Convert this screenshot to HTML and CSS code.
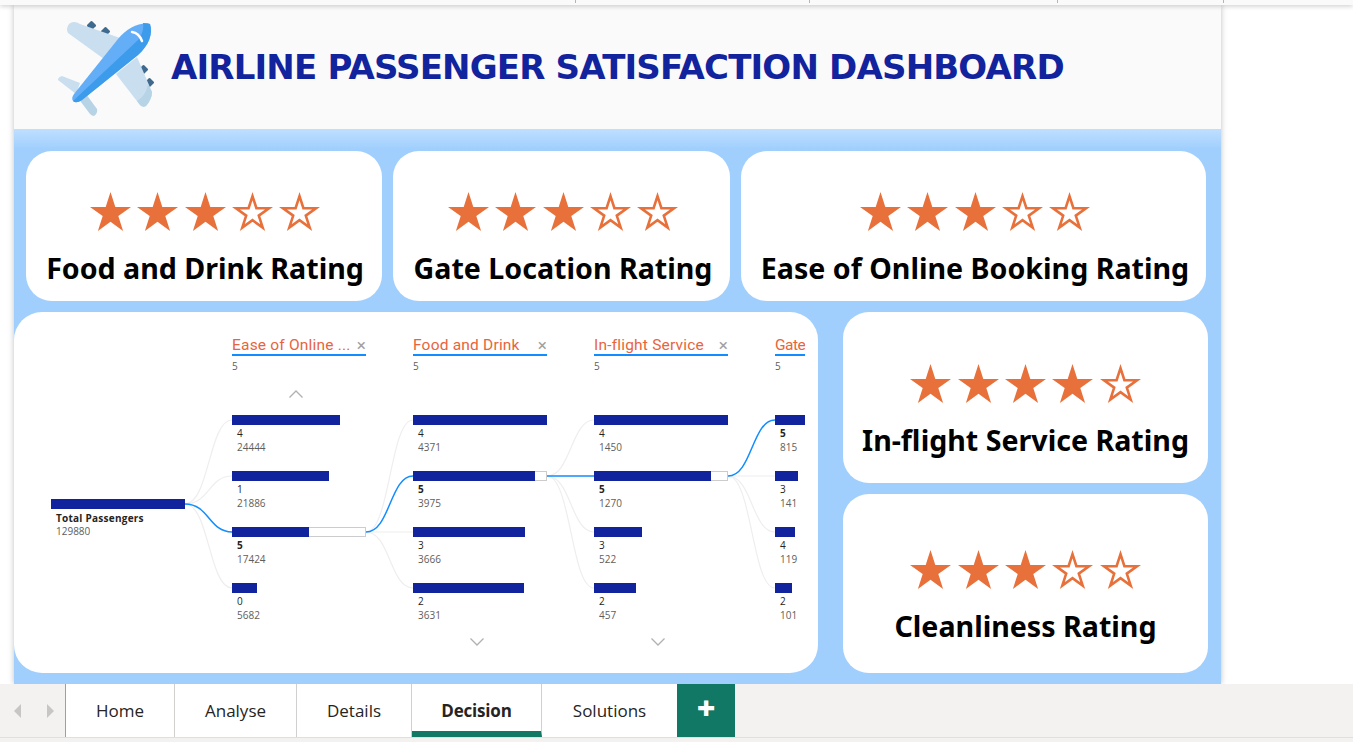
FILE: index.html
```html
<!DOCTYPE html>
<html lang="en">
<head>
  <meta charset="UTF-8">
  <title>Airline Passenger Satisfaction Dashboard</title>
  <link rel="stylesheet" href="styles.css">
</head>
<body>

  <svg class="defs" width="0" height="0">
    <defs>
      <polygon id="star-full" points="20.5,0 25.3,14.9 41,14.9 28.3,24.1 33.1,39 20.5,29.8 7.9,39 12.7,24.1 0,14.9 15.7,14.9"/>
      <polygon id="star-empty" points="20.5,4.2 24.4,16.2 37,16.2 26.8,23.6 30.7,35.6 20.5,28.2 10.3,35.6 14.2,23.6 4,16.2 16.6,16.2"/>
    </defs>
  </svg>

  <div class="topbar">
    <span class="tick t1"></span>
    <span class="tick t2"></span>
    <span class="tick t3"></span>
    <span class="tick t4"></span>
  </div>

  <div class="main">
    <div class="report">
      <div class="header">
        <svg class="plane" width="100" height="100" viewBox="55 15 100 100">
          <rect x="88" y="20" width="7" height="7" rx="1" transform="rotate(45 91.5 23.5)" fill="#3f6a8e"/>
          <rect x="102" y="26" width="7" height="7" rx="1" transform="rotate(45 105.5 29.5)" fill="#3f6a8e"/>
          <rect x="140" y="64" width="7" height="7" rx="1" transform="rotate(45 143.5 67.5)" fill="#3f6a8e"/>
          <rect x="146" y="77" width="7" height="7" rx="1" transform="rotate(45 149.5 80.5)" fill="#3f6a8e"/>
          <path d="M67 27 Q68 20 74 20 Q77 20 80 22 L120 36 L104 57 L68 31 Q67 29 67 27Z" fill="#c9deee"/>
          <path d="M137 55 L152 90 Q152 97 146 104 Q143 106 140 103 L116 72Z" fill="#c9deee"/>
          <path d="M148 82 L152 90 Q152 97 146 104 Q143 106 140 103 L137 99 Q146 94 148 82Z" fill="#b7d3e6"/>
          <path d="M58 78 Q58 75 62 74 L80 81 L76 92Z" fill="#c9deee"/>
          <path d="M78 96 L86 92 L97 107 Q98 111 94 114 Q92 114 90 112Z" fill="#b7d3e6"/>
          <path d="M150 22 C153 32 149 43 138 53 L82 98 Q76 102 73 99 Q71 96 74 92 L118 37 C127 26 140 20 150 22Z" fill="#64aef8"/>
          <path d="M150 22 C153 32 149 43 138 53 L82 98 Q76 102 73 99 L138 38 C142 33 144 27 143 21 Q147 21 150 22Z" fill="#3d9beb"/>
          <path d="M132 30 Q139 31 142 39" fill="none" stroke="#fff" stroke-width="2.5" stroke-linecap="round"/>
        </svg>
        <h1 class="title">AIRLINE PASSENGER SATISFACTION DASHBOARD</h1>
      </div>

      <div class="canvas">
        <div class="row-top">
          <div class="card card-food">
            <div class="stars">
              <svg class="star" viewBox="0 0 41 39"><use href="#star-full"/></svg>
              <svg class="star" viewBox="0 0 41 39"><use href="#star-full"/></svg>
              <svg class="star" viewBox="0 0 41 39"><use href="#star-full"/></svg>
              <svg class="star" viewBox="0 0 41 39"><use href="#star-empty" class="hollow"/></svg>
              <svg class="star" viewBox="0 0 41 39"><use href="#star-empty" class="hollow"/></svg>
            </div>
            <div class="card-label">Food and Drink Rating</div>
          </div>
          <div class="card card-gate">
            <div class="stars">
              <svg class="star" viewBox="0 0 41 39"><use href="#star-full"/></svg>
              <svg class="star" viewBox="0 0 41 39"><use href="#star-full"/></svg>
              <svg class="star" viewBox="0 0 41 39"><use href="#star-full"/></svg>
              <svg class="star" viewBox="0 0 41 39"><use href="#star-empty" class="hollow"/></svg>
              <svg class="star" viewBox="0 0 41 39"><use href="#star-empty" class="hollow"/></svg>
            </div>
            <div class="card-label">Gate Location Rating</div>
          </div>
          <div class="card card-booking">
            <div class="stars">
              <svg class="star" viewBox="0 0 41 39"><use href="#star-full"/></svg>
              <svg class="star" viewBox="0 0 41 39"><use href="#star-full"/></svg>
              <svg class="star" viewBox="0 0 41 39"><use href="#star-full"/></svg>
              <svg class="star" viewBox="0 0 41 39"><use href="#star-empty" class="hollow"/></svg>
              <svg class="star" viewBox="0 0 41 39"><use href="#star-empty" class="hollow"/></svg>
            </div>
            <div class="card-label">Ease of Online Booking Rating</div>
          </div>
        </div>

        <div class="row-bottom">
          <div class="tree-card">
            <svg class="links" width="804" height="361" viewBox="0 0 804 361">
              <g class="link">
                <path d="M171 192 C195 192 195 108 218 108"/>
                <path d="M171 192 C195 192 195 164 218 164"/>
                <path d="M171 192 C195 192 195 276 218 276"/>
                <path d="M352 220 C376 220 376 108 399 108"/>
                <path d="M352 220 L399 220"/>
                <path d="M352 220 C376 220 376 276 399 276"/>
                <path d="M533 164 C557 164 557 108 580 108"/>
                <path d="M533 164 C557 164 557 220 580 220"/>
                <path d="M533 164 C557 164 557 276 580 276"/>
                <path d="M714 164 L761 164"/>
                <path d="M714 164 C738 164 738 220 761 220"/>
                <path d="M714 164 C738 164 738 276 761 276"/>
              </g>
              <g class="link-on">
                <path d="M171 192 C195 192 195 220 218 220"/>
                <path d="M352 220 C376 220 376 164 399 164"/>
                <path d="M533 164 L580 164"/>
                <path d="M714 164 C738 164 738 108 761 108"/>
              </g>
            </svg>

            <div class="tree">
              <div class="col col-root">
                <div class="bar" style="width:134px"></div>
                <div class="node-text">
                  <div class="lbl strong total">Total Passengers</div>
                  <div class="num">129880</div>
                </div>
              </div>

              <div class="col">
                <div class="col-head"><span class="col-name">Ease of Online ...</span><span class="col-x">×</span></div>
                <div class="col-val">5</div>
                <div class="chev-slot"><svg class="chev" width="14" height="8" viewBox="0 0 14 8"><path d="M0.5 7.5 L7 1 L13.5 7.5"/></svg></div>
                <div class="node"><div class="bar" style="width:108px"></div><div class="node-text"><div class="lbl">4</div><div class="num">24444</div></div></div>
                <div class="node"><div class="bar" style="width:97px"></div><div class="node-text"><div class="lbl">1</div><div class="num">21886</div></div></div>
                <div class="node"><div class="track"><div class="bar" style="width:77px"></div></div><div class="node-text"><div class="lbl strong">5</div><div class="num">17424</div></div></div>
                <div class="node"><div class="bar" style="width:25px"></div><div class="node-text"><div class="lbl">0</div><div class="num">5682</div></div></div>
              </div>

              <div class="col">
                <div class="col-head"><span class="col-name">Food and Drink</span><span class="col-x">×</span></div>
                <div class="col-val">5</div>
                <div class="chev-slot"></div>
                <div class="node"><div class="bar" style="width:134px"></div><div class="node-text"><div class="lbl">4</div><div class="num">4371</div></div></div>
                <div class="node"><div class="track"><div class="bar" style="width:122px"></div></div><div class="node-text"><div class="lbl strong">5</div><div class="num">3975</div></div></div>
                <div class="node"><div class="bar" style="width:112px"></div><div class="node-text"><div class="lbl">3</div><div class="num">3666</div></div></div>
                <div class="node"><div class="bar" style="width:111px"></div><div class="node-text"><div class="lbl">2</div><div class="num">3631</div></div></div>
                <svg class="chev chev-down" width="14" height="8" viewBox="0 0 14 8"><path d="M0.5 0.5 L7 7 L13.5 0.5"/></svg>
              </div>

              <div class="col">
                <div class="col-head"><span class="col-name">In-flight Service</span><span class="col-x">×</span></div>
                <div class="col-val">5</div>
                <div class="chev-slot"></div>
                <div class="node"><div class="bar" style="width:134px"></div><div class="node-text"><div class="lbl">4</div><div class="num">1450</div></div></div>
                <div class="node"><div class="track"><div class="bar" style="width:117px"></div></div><div class="node-text"><div class="lbl strong">5</div><div class="num">1270</div></div></div>
                <div class="node"><div class="bar" style="width:48px"></div><div class="node-text"><div class="lbl">3</div><div class="num">522</div></div></div>
                <div class="node"><div class="bar" style="width:42px"></div><div class="node-text"><div class="lbl">2</div><div class="num">457</div></div></div>
                <svg class="chev chev-down" width="14" height="8" viewBox="0 0 14 8"><path d="M0.5 0.5 L7 7 L13.5 0.5"/></svg>
              </div>

              <div class="col">
                <div class="col-head"><span class="col-name col-name-tight">Gate</span></div>
                <div class="col-val">5</div>
                <div class="chev-slot"></div>
                <div class="node"><div class="bar" style="width:134px"></div><div class="node-text"><div class="lbl strong">5</div><div class="num">815</div></div></div>
                <div class="node"><div class="bar" style="width:23px"></div><div class="node-text"><div class="lbl">3</div><div class="num">141</div></div></div>
                <div class="node"><div class="bar" style="width:20px"></div><div class="node-text"><div class="lbl">4</div><div class="num">119</div></div></div>
                <div class="node"><div class="bar" style="width:17px"></div><div class="node-text"><div class="lbl">2</div><div class="num">101</div></div></div>
              </div>
            </div>
          </div>

          <div class="side">
            <div class="card card-flight">
              <div class="stars">
                <svg class="star" viewBox="0 0 41 39"><use href="#star-full"/></svg>
                <svg class="star" viewBox="0 0 41 39"><use href="#star-full"/></svg>
                <svg class="star" viewBox="0 0 41 39"><use href="#star-full"/></svg>
                <svg class="star" viewBox="0 0 41 39"><use href="#star-full"/></svg>
                <svg class="star" viewBox="0 0 41 39"><use href="#star-empty" class="hollow"/></svg>
              </div>
              <div class="card-label">In-flight Service Rating</div>
            </div>
            <div class="card card-clean">
              <div class="stars">
                <svg class="star" viewBox="0 0 41 39"><use href="#star-full"/></svg>
                <svg class="star" viewBox="0 0 41 39"><use href="#star-full"/></svg>
                <svg class="star" viewBox="0 0 41 39"><use href="#star-full"/></svg>
                <svg class="star" viewBox="0 0 41 39"><use href="#star-empty" class="hollow"/></svg>
                <svg class="star" viewBox="0 0 41 39"><use href="#star-empty" class="hollow"/></svg>
              </div>
              <div class="card-label">Cleanliness Rating</div>
            </div>
          </div>
        </div>
      </div>
    </div>
  </div>

  <div class="tabs">
    <div class="tab-arrows">
      <span class="arrow arrow-left"></span>
      <span class="arrow arrow-right"></span>
    </div>
    <div class="tab tab-home">Home</div>
    <div class="tab tab-analyse">Analyse</div>
    <div class="tab tab-details">Details</div>
    <div class="tab tab-decision active">Decision</div>
    <div class="tab tab-solutions">Solutions</div>
    <div class="tab-add">+</div>
  </div>
  <div class="statusbar"></div>

</body>
</html>
```

FILE: styles.css
```css
html, body {
  margin: 0;
  height: 742px;
  overflow: hidden;
  background: #fff;
}

body {
  display: flex;
  flex-direction: column;
  font-family: "Open Sans", "Noto Sans", sans-serif;
}

.defs {
  position: absolute;
}

/* top strip */
.topbar {
  flex: 0 0 5px;
  display: flex;
  background: #fafafa;
  box-shadow: 0 1px 5px rgba(0, 0, 0, 0.22);
  position: relative;
  z-index: 2;
}

.tick {
  height: 3px;
  border-right: 1px solid #b5b5b5;
}
.t1 { width: 575px; }
.t2 { width: 233px; }
.t3 { width: 247px; }
.t4 { width: 165px; }

.main {
  flex: 0 0 679px;
  overflow: hidden;
}

.report {
  margin-left: 14px;
  width: 1207px;
  height: 679px;
  box-shadow: 0 0 6px rgba(0, 0, 0, 0.25);
}

.header {
  height: 124px;
  background: #fafafa;
  display: flex;
  align-items: center;
  padding-left: 41px;
  box-sizing: border-box;
}

.plane {
  flex: none;
  margin-top: -1px;
}

.title {
  margin: 0 0 1px 16px;
  font-family: "DejaVu Sans", sans-serif;
  font-size: 34px;
  font-weight: bold;
  color: #12239e;
  white-space: nowrap;
  letter-spacing: -0.82px;
}

.canvas {
  height: 555px;
  box-sizing: border-box;
  padding-top: 22px;
  background: linear-gradient(#bfdfff, #a0cffe 20px);
}

.row-top {
  display: flex;
  gap: 11px;
  margin-left: 12px;
}

.row-bottom {
  display: flex;
  gap: 25px;
  margin-top: 11px;
}

.card {
  background: #fff;
  border-radius: 26px;
  display: flex;
  flex-direction: column;
  align-items: center;
  box-sizing: border-box;
}

.row-top .card {
  height: 150px;
  padding-top: 41px;
}
.card-food { width: 356px; padding-left: 2px; }
.card-gate { width: 337px; padding-left: 3px; }
.card-booking { width: 465px; padding-left: 3px; }

.side {
  width: 365px;
  display: flex;
  flex-direction: column;
  gap: 11px;
}

.card-flight {
  height: 171px;
  padding-top: 52px;
}
.card-clean {
  height: 179px;
  padding-top: 56px;
}

.stars {
  display: flex;
  gap: 6.4px;
  height: 39px;
}

.star {
  width: 41px;
  height: 39px;
  fill: #e8703a;
}

.star use.hollow {
  fill: none;
  stroke: #e8703a;
  stroke-width: 2.6;
}

.card-label {
  margin-top: 18px;
  font-family: "Noto Sans", "Open Sans", sans-serif;
  font-size: 28.6px;
  line-height: 38px;
  font-weight: 700;
  color: #000;
  white-space: nowrap;
}

/* decomposition tree */
.tree-card {
  position: relative;
  width: 804px;
  height: 361px;
  background: #fff;
  border-radius: 28px;
}

.links {
  position: absolute;
  left: 0;
  top: 0;
}

.links path {
  fill: none;
}

.link path {
  stroke: #eeeeee;
  stroke-width: 1.2;
}

.link-on path {
  stroke: #118dff;
  stroke-width: 1.5;
}

.tree {
  position: relative;
  display: flex;
  gap: 47px;
  width: 754px;
  height: 361px;
  margin-left: 37px;
  padding-top: 25px;
  box-sizing: border-box;
  overflow: hidden;
}

.col {
  flex: 0 0 134px;
  width: 134px;
  font-size: 10px;
}

.col-root {
  padding-top: 162px;
}

.col-head {
  height: 15px;
  padding-bottom: 2px;
  display: flex;
  justify-content: space-between;
  align-items: center;
  border-bottom: 2px solid #118dff;
  font-family: Roboto, sans-serif;
  font-size: 15.5px;
  letter-spacing: 0.2px;
  color: #e8643c;
  white-space: nowrap;
}

.col-name-tight {
  letter-spacing: -0.55px;
}

.col-x {
  color: #a0a0a0;
  font-size: 17px;
}

.col-val {
  margin-top: 4px;
  line-height: 13px;
  color: #605e5c;
}

.chev-slot {
  height: 42px;
  display: flex;
  justify-content: flex-start;
  align-items: center;
  padding-left: 57px;
}

.chev {
  fill: none;
  stroke: #b3b0ad;
  stroke-width: 1.3;
  display: block;
}

.chev-down {
  margin: -1px 0 0 57px;
}

.node {
  height: 56px;
}

.bar {
  height: 10px;
  background: #12239e;
}

.track {
  width: 134px;
  height: 10px;
  box-sizing: border-box;
  background: #fff;
  border: 1px solid #cccccc;
}

.track .bar {
  margin: -1px 0 0 -1px;
}

.node-text {
  padding: 1px 0 0 5px;
  line-height: 14px;
}

.col-root .node-text {
  padding-left: 5px;
  padding-top: 3px;
  line-height: 13px;
}

.lbl {
  color: #252423;
}

.strong {
  font-weight: 700;
}

.total {
  letter-spacing: 0.25px;
}

.num {
  color: #605e5c;
}

/* sheet tabs */
.tabs {
  flex: 0 0 53px;
  display: flex;
  background: #f3f2f1;
  font-size: 17px;
  color: #252423;
}

.tab-arrows {
  width: 66px;
  box-sizing: border-box;
  border-right: 1px solid #a19f9d;
  display: flex;
  align-items: center;
  justify-content: space-between;
  padding: 0 11px 0 14px;
}

.arrow {
  width: 0;
  height: 0;
  border-top: 7px solid transparent;
  border-bottom: 7px solid transparent;
}
.arrow-left { border-right: 7px solid #c8c6c4; }
.arrow-right { border-left: 7px solid #c8c6c4; }

.tab {
  box-sizing: border-box;
  display: flex;
  align-items: center;
  justify-content: center;
  background: #fff;
  border-right: 1px solid #d2d0ce;
}
.tab-home { width: 109px; }
.tab-analyse { width: 122px; }
.tab-details { width: 115px; }
.tab-decision { width: 130px; }
.tab-solutions { width: 135px; border-right: 0; }

.tab.active {
  font-weight: 700;
  letter-spacing: -0.2px;
  border-bottom: 6px solid #117865;
  padding-top: 6px;
}

.tab-add {
  width: 58px;
  background: #117865;
  color: #fff;
  font-size: 32px;
  font-weight: 800;
  line-height: 48px;
  text-align: center;
}

.statusbar {
  flex: 0 0 5px;
  background: #f3f2f1;
  border-top: 1px solid #e1dfdd;
  box-sizing: border-box;
}
```
